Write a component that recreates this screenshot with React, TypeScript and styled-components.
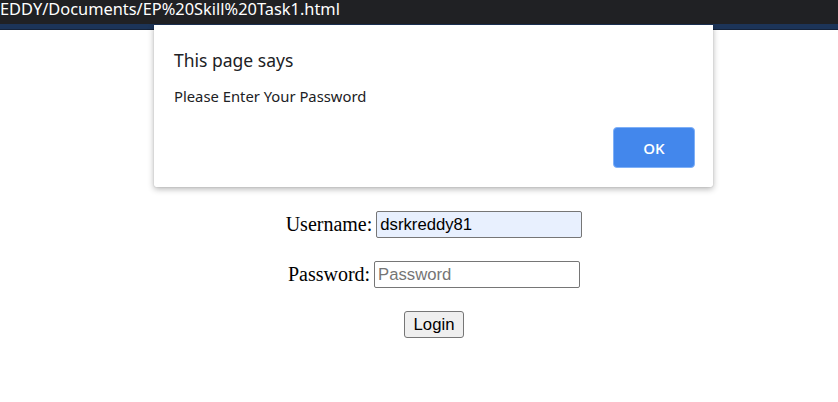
import React from "react";
import styled, { createGlobalStyle } from "styled-components";

const Global = createGlobalStyle`
  html, body { margin: 0; padding: 0; background: #ffffff; }
  body { width: 838px; height: 402px; overflow: hidden; }
`;

const Page = styled.div`
  position: relative;
  width: 838px;
  height: 402px;
  background: #fff;
`;

const AddressBar = styled.div`
  height: 24px;
  box-sizing: border-box;
  padding-top: 0;
  background: #202124;
  color: #ffffff;
  font-family: "Noto Sans", "Open Sans", sans-serif;
  font-size: 16.4px;
  line-height: 18px;
  white-space: nowrap;
`;

const Strip = styled.div`
  height: 5px;
  background: #1c3458;
  border-bottom: 1px solid #15233a;
`;

const Form = styled.form`
  display: flex;
  flex-direction: column;
  align-items: center;
  padding-left: 30px;
  padding-top: 181px;
  gap: 23px;
  font-family: "Liberation Serif", "Times New Roman", serif;
  font-size: 20px;
  color: #000;
`;

const Row = styled.div`
  display: flex;
  align-items: center;
  gap: 4px;
`;

const Field = styled.input<{ $filled?: boolean }>`
  box-sizing: border-box;
  width: 206px;
  height: 27px;
  border: 1px solid #767676;
  border-radius: 2px;
  padding: 1px 3px;
  font-family: "Liberation Sans", Arial, sans-serif;
  font-size: 16.7px;
  color: #000;
  background: ${(p) => (p.$filled ? "#e8f0fe" : "#fff")};
  outline: none;
  &::placeholder { color: #757575; }
`;

const LoginButton = styled.button`
  box-sizing: border-box;
  width: 60px;
  height: 27px;
  border: 1px solid #767676;
  border-radius: 3px;
  background: #efefef;
  font-family: "Liberation Sans", Arial, sans-serif;
  font-size: 16.7px;
  color: #000;
  padding: 0;
`;

const Dialog = styled.div`
  position: absolute;
  left: 154px;
  top: 25px;
  width: 559px;
  height: 162px;
  box-sizing: border-box;
  background: #fff;
  border-radius: 0 0 2px 2px;
  box-shadow: 0 2px 6px rgba(0, 0, 0, 0.3), 0 0 1px rgba(0, 0, 0, 0.3);
  padding: 22px 18px 19px 20px;
  display: flex;
  flex-direction: column;
  font-family: "Noto Sans", "Open Sans", sans-serif;
  color: #202124;
`;

const Title = styled.div`
  font-size: 17.5px;
  line-height: 26px;
`;

const Message = styled.div`
  font-size: 14.8px;
  line-height: 20px;
  margin-top: 13px;
`;

const Actions = styled.div`
  margin-top: auto;
  display: flex;
  justify-content: flex-end;
`;

const OkButton = styled.button`
  width: 82px;
  height: 41px;
  border: 1px solid #7fb0f7;
  border-radius: 4px;
  background: #4387ec;
  color: #fff;
  font-family: "Open Sans", "Noto Sans", sans-serif;
  font-weight: 600;
  font-size: 15px;
  padding: 0;
`;

export default function App() {
  return (
    <Page>
      <Global />
      <AddressBar>EDDY/Documents/EP%20Skill%20Task1.html</AddressBar>
      <Strip />
      <Form onSubmit={(e) => e.preventDefault()}>
        <Row>
          <label>Username:</label>
          <Field $filled defaultValue="dsrkreddy81" />
        </Row>
        <Row>
          <label>Password:</label>
          <Field type="password" placeholder="Password" />
        </Row>
        <LoginButton type="submit">Login</LoginButton>
      </Form>
      <Dialog role="dialog">
        <Title>This page says</Title>
        <Message>Please Enter Your Password</Message>
        <Actions>
          <OkButton>OK</OkButton>
        </Actions>
      </Dialog>
    </Page>
  );
}
